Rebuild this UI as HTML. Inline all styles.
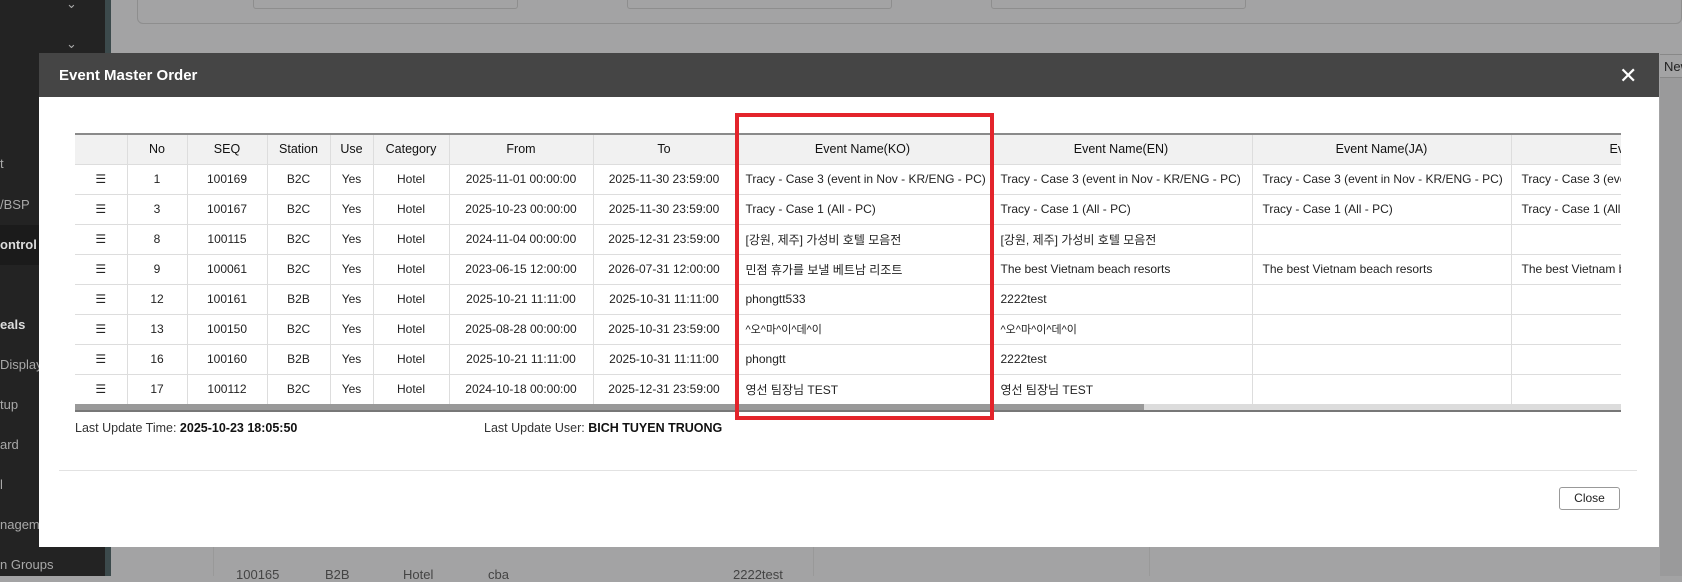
<!DOCTYPE html>
<html><head><meta charset="utf-8"><style>
*{margin:0;padding:0;box-sizing:border-box}
body{width:1682px;height:576px;overflow:hidden;background:#a3a3a4;position:relative;font-family:"Liberation Sans","Noto Sans CJK KR",sans-serif;font-size:12px;color:#222}
.sb{position:absolute;left:0;top:0;width:105px;height:576px;background:#232323;color:#a9a9a9;font-size:13px}
.sb div{position:absolute;right:8px;white-space:nowrap}
.strip{position:absolute;left:105px;top:0;width:6px;height:576px;background:#3c4a4c}
.modal{position:absolute;left:39px;top:53px;width:1620px;height:494px;background:#fff}
.hd{height:44px;background:#454545;color:#fff;font-weight:bold;font-size:15px;padding:14px 0 0 20px}
.x{position:absolute;left:1580px;top:10px;color:#fff;font-size:22px}
table{border-collapse:collapse;table-layout:fixed;width:1606px}
.tw{position:absolute;left:36px;top:80px;width:1546px;height:278px;overflow:hidden;border-top:2px solid #8a8a8a}
.tw table{position:absolute;left:0;top:0}
th{background:#f1f1f1;font-weight:normal;font-size:12.5px;height:29px;border-right:1px solid #ddd;border-bottom:1px solid #ddd;color:#111}
td{height:30px;border-right:1px solid #ddd;border-bottom:1px solid #ddd;text-align:center;white-space:nowrap;overflow:hidden;color:#222}
td.l{text-align:left;padding-left:10px}
.scroll{position:absolute;left:36px;top:351px;width:1546px;height:6px;background:#dcdcdc;border-bottom:2px solid #777;box-sizing:content-box}
.thumb{position:absolute;left:0;top:0;width:1069px;height:6px;background:#999}
.red{position:absolute;left:696px;top:60px;width:259px;height:307px;border:4px solid #e3242b}
</style></head><body>
<div style="position:absolute;left:137px;top:-8px;width:1545px;height:32px;border:1px solid #8e8e8e;border-radius:6px;background:#a3a3a4"></div>
<div style="position:absolute;left:253px;top:-5px;width:265px;height:14px;border:1px solid #8e8e8e;border-radius:3px"></div>
<div style="position:absolute;left:627px;top:-5px;width:265px;height:14px;border:1px solid #8e8e8e;border-radius:3px"></div>
<div style="position:absolute;left:991px;top:-5px;width:255px;height:14px;border:1px solid #8e8e8e;border-radius:3px"></div>
<div style="position:absolute;left:1660px;top:54px;width:30px;height:24px;border-top:1px solid #888;border-bottom:1px solid #888;font-size:13px;padding:4px 0 0 4px;color:#222">New</div>
<div style="position:absolute;left:1660px;top:88px;width:30px;border-top:1px solid #888"></div>
<div class="sb">
<div style="left:66px;top:-4px">⌄</div><div style="left:66px;top:36px">⌄</div>
<div style="left:0;top:156px;right:auto">t</div>
<div style="left:0;top:197px;right:auto">/BSP</div>
<div style="left:0;top:225px;right:auto;width:105px;height:40px;background:#1b1b1b"></div>
<div style="left:0;top:237px;right:auto;font-weight:bold;color:#ddd">ontrol</div>
<div style="left:0;top:317px;right:auto;font-weight:bold;color:#ddd">eals</div>
<div style="left:0;top:357px;right:auto">Display</div>
<div style="left:0;top:397px;right:auto">tup</div>
<div style="left:0;top:437px;right:auto">ard</div>
<div style="left:0;top:477px;right:auto">l</div>
<div style="left:0;top:517px;right:auto">nageme</div>
<div style="left:0;top:557px;right:auto">n Groups</div>
</div>
<div class="strip"></div>
<div style="position:absolute;left:213px;top:547px;width:1447px;height:29px;color:#444;font-size:13px">
<div style="position:absolute;left:0;top:0;width:1px;height:29px;background:#999"></div>
<div style="position:absolute;top:20px;left:23px">100165</div>
<div style="position:absolute;top:20px;left:112px">B2B</div>
<div style="position:absolute;top:20px;left:190px">Hotel</div>
<div style="position:absolute;top:20px;left:275px">cba</div>
<div style="position:absolute;top:20px;left:520px">2222test</div>
<div style="position:absolute;left:600px;top:0;width:1px;height:29px;background:#999"></div>
<div style="position:absolute;left:936px;top:0;width:1px;height:29px;background:#999"></div>
</div>
<div style="position:absolute;left:1660px;top:78px;width:22px;height:498px;background:#9a9a9b"></div>
<div class="modal">
<div class="hd">Event Master Order</div>
<div class="x">✕</div>
<div class="tw"><table>
<colgroup><col style="width:52px"><col style="width:60px"><col style="width:80px"><col style="width:63px"><col style="width:43px"><col style="width:76px"><col style="width:144px"><col style="width:142px"><col style="width:255px"><col style="width:262px"><col style="width:259px"><col style="width:170px"></colgroup>
<tr><th></th><th>No</th><th>SEQ</th><th>Station</th><th>Use</th><th>Category</th><th>From</th><th>To</th><th>Event Name(KO)</th><th>Event Name(EN)</th><th>Event Name(JA)</th><th style="text-align:left;padding-left:98px">Event</th></tr>
<tr><td>☰</td><td>1</td><td>100169</td><td>B2C</td><td>Yes</td><td>Hotel</td><td>2025-11-01 00:00:00</td><td>2025-11-30 23:59:00</td><td class="l">Tracy - Case 3 (event in Nov - KR/ENG - PC)</td><td class="l">Tracy - Case 3 (event in Nov - KR/ENG - PC)</td><td class="l">Tracy - Case 3 (event in Nov - KR/ENG - PC)</td><td class="l">Tracy - Case 3 (event in Nov</td></tr>
<tr><td>☰</td><td>3</td><td>100167</td><td>B2C</td><td>Yes</td><td>Hotel</td><td>2025-10-23 00:00:00</td><td>2025-11-30 23:59:00</td><td class="l">Tracy - Case 1 (All - PC)</td><td class="l">Tracy - Case 1 (All - PC)</td><td class="l">Tracy - Case 1 (All - PC)</td><td class="l">Tracy - Case 1 (All - PC)</td></tr>
<tr><td>☰</td><td>8</td><td>100115</td><td>B2C</td><td>Yes</td><td>Hotel</td><td>2024-11-04 00:00:00</td><td>2025-12-31 23:59:00</td><td class="l">[강원, 제주] 가성비 호텔 모음전</td><td class="l">[강원, 제주] 가성비 호텔 모음전</td><td></td><td></td></tr>
<tr><td>☰</td><td>9</td><td>100061</td><td>B2C</td><td>Yes</td><td>Hotel</td><td>2023-06-15 12:00:00</td><td>2026-07-31 12:00:00</td><td class="l">민점 휴가를 보낼 베트남 리조트</td><td class="l">The best Vietnam beach resorts</td><td class="l">The best Vietnam beach resorts</td><td class="l">The best Vietnam beach</td></tr>
<tr><td>☰</td><td>12</td><td>100161</td><td>B2B</td><td>Yes</td><td>Hotel</td><td>2025-10-21 11:11:00</td><td>2025-10-31 11:11:00</td><td class="l">phongtt533</td><td class="l">2222test</td><td></td><td></td></tr>
<tr><td>☰</td><td>13</td><td>100150</td><td>B2C</td><td>Yes</td><td>Hotel</td><td>2025-08-28 00:00:00</td><td>2025-10-31 23:59:00</td><td class="l" style="font-size:11px">^오^마^이^데^이</td><td class="l" style="font-size:11px">^오^마^이^데^이</td><td></td><td></td></tr>
<tr><td>☰</td><td>16</td><td>100160</td><td>B2B</td><td>Yes</td><td>Hotel</td><td>2025-10-21 11:11:00</td><td>2025-10-31 11:11:00</td><td class="l">phongtt</td><td class="l">2222test</td><td></td><td></td></tr>
<tr><td>☰</td><td>17</td><td>100112</td><td>B2C</td><td>Yes</td><td>Hotel</td><td>2024-10-18 00:00:00</td><td>2025-12-31 23:59:00</td><td class="l">영선 팀장님 TEST</td><td class="l">영선 팀장님 TEST</td><td></td><td></td></tr>
</table></div>
<div class="scroll"><div class="thumb"></div></div>
<div class="red"></div>
<div style="position:absolute;left:36px;top:368px;color:#333;font-size:12.5px">Last Update Time: <b style="color:#111">2025-10-23 18:05:50</b></div>
<div style="position:absolute;left:445px;top:368px;color:#333;font-size:12.5px">Last Update User: <b style="color:#111">BICH TUYEN TRUONG</b></div>
<div style="position:absolute;left:20px;top:417px;width:1578px;height:1px;background:#e2e2e2"></div>
<div style="position:absolute;left:1520px;top:434px;width:61px;height:23px;border:1px solid #999;border-radius:3px;text-align:center;line-height:21px;font-size:12px;color:#222">Close</div>
</div>
</body></html>
